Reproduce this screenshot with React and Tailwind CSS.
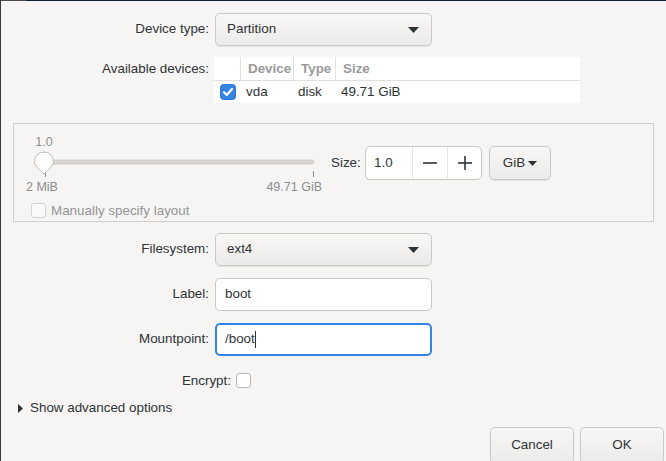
import React from 'react';

const font = "font-['Liberation_Sans',sans-serif]";

const Arrow = ({ w = 11, h = 6 }) => (
  <svg width={w} height={h} viewBox={`0 0 ${w} ${h}`}>
    <path d={`M0 0 L${w} 0 L${w / 2} ${h} Z`} fill="#2e3436" />
  </svg>
);

const Check = () => (
  <svg width="16" height="16" viewBox="0 0 16 16">
    <rect x="0.5" y="0.5" width="15" height="15" rx="3" fill="#3584e4" stroke="#2a76d6" />
    <path d="M4 8.2 L6.8 11 L12 5" fill="none" stroke="#fff" strokeWidth="2.2" strokeLinecap="round" strokeLinejoin="round" />
  </svg>
);

const EmptyBox = ({ disabled }) => (
  <span
    className={`block w-[15px] h-[15px] rounded-[3px] border ${
      disabled ? 'border-[#d5d0cc] bg-[#faf9f8]' : 'border-[#bfb8b1] bg-white'
    }`}
  />
);

const Combo = ({ value }) => (
  <div className="w-[217px] h-[33px] flex items-center justify-between pl-[11px] pr-[12px] rounded-[5px] border border-[#cdc7c2] bg-linear-to-b from-[#f8f7f6] to-[#edebe9] shadow-[0_1px_1px_rgba(0,0,0,0.07)] text-[13.4px] text-[#2e3436]">
    <span>{value}</span>
    <Arrow />
  </div>
);

const Entry = ({ value, focused }) => (
  <div
    className={`w-[217px] h-[33px] flex items-center rounded-[5px] bg-white text-[13.4px] text-[#2e3436] ${
      focused ? 'border-2 border-[#3584e4] pl-[8px]' : 'border border-[#cdc7c2] pl-[9px]'
    }`}
  >
    <span>{value}</span>
    {focused && <span className="w-px h-[17px] bg-[#2e3436]" />}
  </div>
);

const Row = ({ label, children, className = '' }) => (
  <div className={`flex items-center gap-[6px] ${className}`}>
    <span className="w-[208px] text-right text-[13.4px] text-[#2e3436]">{label}</span>
    {children}
  </div>
);

const Slider = () => (
  <svg width="296" height="30" viewBox="0 0 296 30">
    <rect x="18" y="9" width="270" height="4" rx="2" fill="#dad6d2" stroke="#cbc6c1" strokeWidth="0.8" />
    <line x1="19.5" y1="20" x2="19.5" y2="26" stroke="#8b8e8f" />
    <line x1="287.5" y1="20" x2="287.5" y2="26" stroke="#8b8e8f" />
    <path
      d="M18 1 A9.5 9.5 0 0 1 27.5 10.5 C27.5 14.5 23 18 18 23 C13 18 8.5 14.5 8.5 10.5 A9.5 9.5 0 0 1 18 1 Z"
      fill="#fdfdfd"
      stroke="#c0b9b2"
    />
  </svg>
);

export default function App() {
  return (
    <div className={`w-[666px] h-[461px] overflow-hidden bg-[#f6f5f4] border-l border-[#3a3a3a] ${font}`}>
      <div className="flex h-px">
        <div className="w-[25px] bg-[#4a4a4a]" />
        <div className="flex-1 bg-[#0b1f3a]" />
      </div>

      <Row label="Device type:" className="mt-[12px]">
        <Combo value="Partition" />
      </Row>

      <div className="flex items-start gap-[5px] mt-[11px]">
        <span className="w-[208px] h-[24px] leading-[24px] text-right text-[13.4px] text-[#2e3436]">Available devices:</span>
        <div className="w-[366px] bg-white text-[13.4px]">
          <div className="flex h-[24px] border-b border-[#e2e0de] text-[#9a9a9a] font-bold">
            <div className="w-[27px] border-r border-[#e2e0de]" />
            <div className="w-[53px] pl-[7px] leading-[24px] border-r border-[#e2e0de]">Device</div>
            <div className="w-[42px] pl-[7px] leading-[24px] border-r border-[#e2e0de]">Type</div>
            <div className="flex-1 pl-[7px] leading-[24px]">Size</div>
          </div>
          <div className="flex h-[22px] items-center text-[#2e3436]">
            <div className="w-[27px] pl-[6px]">
              <Check />
            </div>
            <div className="w-[53px] pl-[5px]">vda</div>
            <div className="w-[42px] pl-[4px]">disk</div>
            <div className="flex-1 pl-[5px]">49.71 GiB</div>
          </div>
        </div>
      </div>

      <div className="ml-[12px] mt-[20px] w-[641px] border border-[#d3cec9] pl-[12px] pt-[9px] pb-[3px]">
        <div className="flex items-start">
          <div className="flex flex-col w-[296px]">
            <div className="w-[36px] text-center text-[12.5px] leading-[18px] text-[#8b8e8f]">1.0</div>
            <Slider />
            <div className="flex justify-between w-[296px] text-[12.5px] leading-[14px] text-[#8b8e8f] -mt-px">
              <span>2 MiB</span>
              <span>49.71 GiB</span>
            </div>
            <div className="flex items-center gap-[5px] mt-[9px] pl-[5px]">
              <EmptyBox disabled />
              <span className="text-[13.4px] leading-[15px] text-[#929595]">Manually specify layout</span>
            </div>
          </div>
          <div className="flex items-center mt-[13px] ml-[9px]">
            <span className="w-[28px] text-[13.4px] text-[#2e3436]">Size:</span>
            <div className="ml-[6px] flex h-[34px] w-[117px] rounded-[5px] border border-[#cdc7c2] bg-white text-[#2e3436]">
              <div className="w-[46px] pl-[8px] flex items-center text-[13.4px]">1.0</div>
              <div className="w-[35px] flex items-center justify-center border-l border-[#e6e3e0]">
                <svg width="14" height="14" viewBox="0 0 14 14">
                  <line x1="0" y1="7" x2="14" y2="7" stroke="#2e3436" strokeWidth="1.6" />
                </svg>
              </div>
              <div className="flex-1 flex items-center justify-center border-l border-[#e6e3e0]">
                <svg width="14" height="14" viewBox="0 0 14 14">
                  <line x1="0" y1="7" x2="14" y2="7" stroke="#2e3436" strokeWidth="1.6" />
                  <line x1="7" y1="0" x2="7" y2="14" stroke="#2e3436" strokeWidth="1.6" />
                </svg>
              </div>
            </div>
            <div className="ml-[7px] w-[62px] h-[34px] flex items-center justify-center gap-[3px] rounded-[5px] border border-[#cdc7c2] bg-linear-to-b from-[#f8f7f6] to-[#edebe9] shadow-[0_1px_1px_rgba(0,0,0,0.07)] text-[13.4px] text-[#2e3436]">
              <span>GiB</span>
              <Arrow w={9} h={5} />
            </div>
          </div>
        </div>
      </div>

      <Row label="Filesystem:" className="mt-[11px]">
        <Combo value="ext4" />
      </Row>
      <Row label="Label:" className="mt-[12px]">
        <Entry value="boot" />
      </Row>
      <Row label="Mountpoint:" className="mt-[12px]">
        <Entry value="/boot" focused />
      </Row>

      <div className="flex items-center gap-[5px] mt-[17px]">
        <span className="w-[230px] text-right text-[13.4px] leading-[15px] text-[#2e3436]">Encrypt:</span>
        <EmptyBox />
      </div>

      <div className="flex items-center gap-[7px] pl-[17px] mt-[10px] h-[20px] text-[13.4px] text-[#2e3436]">
        <svg width="5" height="9" viewBox="0 0 5 9">
          <path d="M0 0 L5 4.5 L0 9 Z" fill="#2e3436" />
        </svg>
        <span>Show advanced options</span>
      </div>

      <div className="flex justify-end gap-[6px] pr-[2px] mt-[9px]">
        {['Cancel', 'OK'].map((t) => (
          <div
            key={t}
            className="w-[84px] h-[37px] flex items-center justify-center rounded-[5px] border border-[#cdc7c2] bg-linear-to-b from-[#f8f7f6] to-[#edebe9] shadow-[0_1px_1px_rgba(0,0,0,0.07)] text-[13.4px] text-[#2e3436]"
          >
            {t}
          </div>
        ))}
      </div>
    </div>
  );
}
